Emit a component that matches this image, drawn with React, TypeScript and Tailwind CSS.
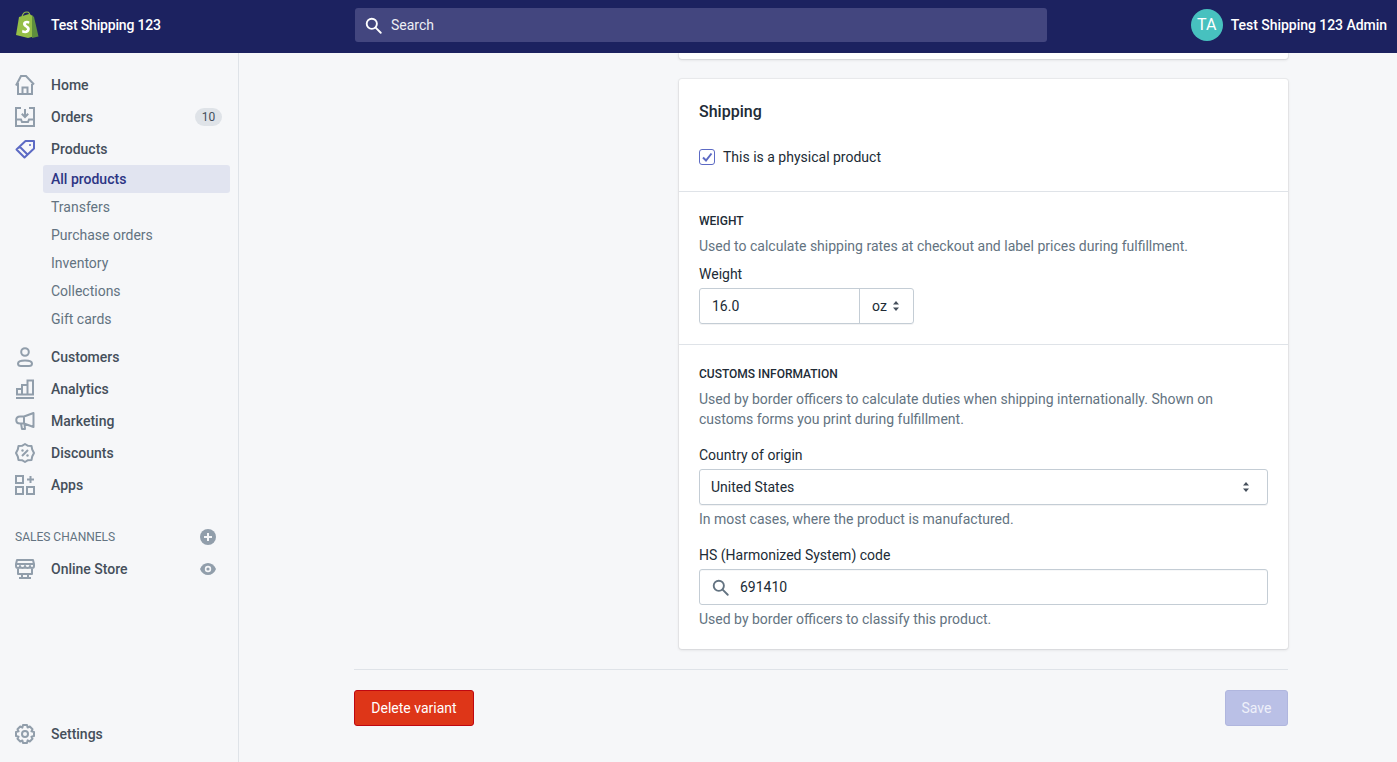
import type { ReactNode } from 'react'

const font = { fontFamily: 'Roboto, sans-serif' }

function Icon({ children, className = 'text-[#919eab]' }: { children: ReactNode; className?: string }) {
  return (
    <svg viewBox="0 0 20 20" className={`w-5 h-5 shrink-0 ${className}`} fill="none" stroke="currentColor" strokeWidth="2">
      {children}
    </svg>
  )
}

const HomeIcon = () => (
  <Icon>
    <path d="M1 10.5 L6 1 H11 L19 9.5 M3 8 V19 H17 V9 M7.5 19 V12.5 H12.5 V19" strokeLinejoin="miter" />
  </Icon>
)
const OrdersIcon = () => (
  <Icon>
    <path d="M6 1 H1 V19 H19 V1 H14 M1 12.5 H6 L7 15 H13 L14 12.5 H19" />
    <path d="M10 2 V9.5 M6.8 6.8 L10 10 L13.2 6.8" />
  </Icon>
)
const ProductsIcon = () => (
  <Icon className="text-[#5c6ac4]">
    <path d="M1.5 10.5 L10.5 2 H19 V9.5 L9.5 18.5 Z M5 8 L12 15" strokeLinejoin="round" />
    <circle cx="15" cy="6" r="1" fill="currentColor" stroke="none" />
  </Icon>
)
const CustomersIcon = () => (
  <Icon>
    <circle cx="10" cy="5" r="3.8" />
    <path d="M3 16.5 C3 12.5 17 12.5 17 16.5 C17 19 15 19 14 19 H6 C5 19 3 19 3 16.5 Z" />
  </Icon>
)
const AnalyticsIcon = () => (
  <Icon>
    <path d="M1 19 H19 M2 15.5 V10 H7 V15.5 M7 15.5 V6 H12.5 V15.5 M12.5 15.5 V1.5 H18 V15.5 M1 15.5 H19" />
  </Icon>
)
const MarketingIcon = () => (
  <Icon>
    <path d="M18.5 2 V16 L9 12.5 H5 C0 12.5 0 5.5 5 5.5 H9 Z M9 5.5 V12.5 M6 12.5 L7 18 H10 L9.5 13" strokeLinejoin="round" />
  </Icon>
)
const DiscountsIcon = () => (
  <Icon>
    <path d="M10 1 L13 2.8 L16.5 3 L17.2 6.5 L19 10 L17.2 13.5 L16.5 17 L13 17.2 L10 19 L7 17.2 L3.5 17 L2.8 13.5 L1 10 L2.8 6.5 L3.5 3 L7 2.8 Z" strokeLinejoin="round" />
    <path d="M13 7 L7 13" />
    <circle cx="7.5" cy="7.5" r="1.2" fill="currentColor" stroke="none" />
    <circle cx="12.5" cy="12.5" r="1.2" fill="currentColor" stroke="none" />
  </Icon>
)
const AppsIcon = () => (
  <Icon>
    <path d="M1 1 H8 V8 H1 Z M1 12 H8 V19 H1 Z M12 12 H19 V19 H12 Z M15.5 1 V8 M12 4.5 H19" />
  </Icon>
)
const StoreIcon = () => (
  <Icon>
    <path d="M2 1 H18 L19 5 V7 C19 9.5 15 9.5 15 7 C15 9.5 10 9.5 10 7 C10 9.5 5 9.5 5 7 C5 9.5 1 9.5 1 7 V5 Z M1 5 H19 M3 9 V15 H17 V9 M7 15 V19 M13 15 V19 M4 19 H16" strokeLinejoin="round" />
  </Icon>
)
const SettingsIcon = () => (
  <Icon>
    <circle cx="10" cy="10" r="3" />
    <path d="M8 1 H12 L12.6 3.6 L14.8 2.5 L17.5 5.2 L16.4 7.4 L19 8 V12 L16.4 12.6 L17.5 14.8 L14.8 17.5 L12.6 16.4 L12 19 H8 L7.4 16.4 L5.2 17.5 L2.5 14.8 L3.6 12.6 L1 12 V8 L3.6 7.4 L2.5 5.2 L5.2 2.5 L7.4 3.6 Z" strokeLinejoin="round" />
  </Icon>
)

function Updown() {
  return (
    <svg viewBox="0 0 8 12" className="w-2 h-3 text-[#454f5b]" fill="currentColor">
      <path d="M4 1 L7 4.5 H1 Z M4 11 L1 7.5 H7 Z" />
    </svg>
  )
}

function SearchGlyph({ className }: { className: string }) {
  return (
    <svg viewBox="0 0 20 20" className={className} fill="none" stroke="currentColor" strokeWidth="2.2">
      <circle cx="8" cy="8" r="6" />
      <path d="M12.5 12.5 L18.5 18.5" strokeLinecap="round" />
    </svg>
  )
}

function NavItem({ icon, label, children }: { icon: ReactNode; label: string; children?: ReactNode }) {
  return (
    <div className="h-8 flex items-center pl-[15px] pr-[16px]">
      {icon}
      <span className="ml-4 pt-px text-[14px] font-medium text-[#454f5b]">{label}</span>
      <div className="ml-auto flex items-center">{children}</div>
    </div>
  )
}

function Section({ children }: { children: ReactNode }) {
  return <div className="border-t border-[#dfe3e8] px-5">{children}</div>
}

export default function App() {
  const subItems = ['Transfers', 'Purchase orders', 'Inventory', 'Collections', 'Gift cards']

  return (
    <div style={font} className="h-screen flex flex-col overflow-hidden bg-[#f6f7f9] text-[14px] text-[#212b36]">
      {/* TOP BAR */}
      <header className="h-[53px] shrink-0 bg-[#1c2260] flex items-center pb-[3px] text-white">
        <div className="w-[355px] shrink-0 flex items-center pl-[15px]">
          <svg viewBox="0 0 24 28" className="w-6 h-7 shrink-0">
            <path d="M1 24 L4 6 L14 3 L18 5 L20 25 L13 27 Z" fill="#95bf47" />
            <path d="M17 4.6 L19 6 L23.5 25.5 L17 27 Z" fill="#5e8e3e" />
            <path d="M7 7 C7 2 10 1 12 1 C14 1 15 3 15 6" fill="none" stroke="#95bf47" strokeWidth="1.2" />
            <path d="M14.5 10.5 C12 9 8 10 8 13 C8 16 12 16 12 18.5 C12 20 9.5 20 7.5 18.8 L7 21.5 C10 23 14.5 22.5 14.8 18 C15 15 11 14.5 11 13 C11 12 12.5 11.8 14 12.8 Z" fill="#fff" />
          </svg>
          <span className="ml-3 text-[14px] font-medium tracking-[-0.18px]">Test Shipping 123</span>
        </div>
        <div className="w-[692px] h-[34px] bg-[#43467f] rounded-[3px] flex items-center pl-[10px]">
          <SearchGlyph className="w-[17px] h-[17px] text-white" />
          <span className="ml-[9px] text-[14px] text-[#eceef5]">Search</span>
        </div>
        <div className="ml-auto flex items-center pr-[10px]">
          <div className="w-8 h-8 rounded-full bg-[#47c1bf] flex items-center justify-center text-[16px]">TA</div>
          <span className="ml-2 text-[14px] font-medium tracking-[-0.04px]">Test Shipping 123 Admin</span>
        </div>
      </header>

      <div className="flex-1 flex min-h-0">
        {/* SIDEBAR */}
        <aside className="w-[239px] shrink-0 border-r border-[#dfe3e8] flex flex-col pt-4 pb-3">
          <NavItem icon={<HomeIcon />} label="Home" />
          <NavItem icon={<OrdersIcon />} label="Orders">
            <span className="w-[27px] h-[18px] rounded-full bg-[#dfe3e8] text-[12px] text-[#454f5b] flex items-center justify-center">10</span>
          </NavItem>
          <NavItem icon={<ProductsIcon />} label="Products" />
          <div className="pl-[43px] pr-2">
            <div className="h-7 rounded-[3px] bg-[#e1e4f0] pl-2 pt-px flex items-center font-medium text-[#2d3584]">All products</div>
            {subItems.map((item) => (
              <div key={item} className="h-7 pl-2 pt-px flex items-center text-[#637381]">{item}</div>
            ))}
          </div>
          <div className="h-2 shrink-0"></div>
          <NavItem icon={<CustomersIcon />} label="Customers" />
          <NavItem icon={<AnalyticsIcon />} label="Analytics" />
          <NavItem icon={<MarketingIcon />} label="Marketing" />
          <NavItem icon={<DiscountsIcon />} label="Discounts" />
          <NavItem icon={<AppsIcon />} label="Apps" />
          <div className="h-8 mt-5 flex items-center pl-[15px] pr-[22px] text-[12px] text-[#637381]">
            <span>SALES CHANNELS</span>
            <svg viewBox="0 0 16 16" className="ml-auto w-4 h-4">
              <circle cx="8" cy="8" r="8" fill="#919eab" />
              <path d="M8 4 V12 M4 8 H12" stroke="#f6f7f9" strokeWidth="2" />
            </svg>
          </div>
          <NavItem icon={<StoreIcon />} label="Online Store">
            <svg viewBox="0 0 16 12" className="w-4 h-3 mr-[6px]">
              <path d="M0 6 C3 -2 13 -2 16 6 C13 14 3 14 0 6 Z" fill="#919eab" />
              <circle cx="8" cy="6" r="3.2" fill="#f6f7f9" />
              <circle cx="8" cy="6" r="1.6" fill="#919eab" />
            </svg>
          </NavItem>
          <div className="mt-auto">
            <NavItem icon={<SettingsIcon />} label="Settings" />
          </div>
        </aside>

        {/* MAIN */}
        <main className="flex-1 min-w-0 pl-[115px] pr-[109px] flex flex-col">
          <div className="ml-[325px] h-[6px] shrink-0 bg-white rounded-b-[3px] shadow-[0_0_0_1px_rgba(63,63,68,0.05),0_1px_3px_0_rgba(63,63,68,0.15)]"></div>

          <section className="ml-[325px] mt-5 bg-white rounded-[3px] shadow-[0_0_0_1px_rgba(63,63,68,0.05),0_1px_3px_0_rgba(63,63,68,0.15)]">
            <div className="px-5 pt-[21px] h-[112px]">
              <h2 className="text-[16px] leading-6 font-medium">Shipping</h2>
              <label className="mt-[22px] flex items-center">
                <span className="w-4 h-4 rounded-[3px] border-[1.5px] border-[#5c6ac4] bg-white flex items-center justify-center">
                  <svg viewBox="0 0 12 12" className="w-3 h-3 text-[#5c6ac4]" fill="none" stroke="currentColor" strokeWidth="2">
                    <path d="M2 6.5 L5 9.5 L10.5 2.5" />
                  </svg>
                </span>
                <span className="ml-2 pt-px">This is a physical product</span>
              </label>
            </div>

            <Section>
              <div className="h-[152px] pt-[21px]">
                <h3 className="text-[12px] leading-4 font-medium">WEIGHT</h3>
                <p className="mt-[7px] leading-5 text-[#637381]">Used to calculate shipping rates at checkout and label prices during fulfillment.</p>
                <div className="mt-2 leading-5">Weight</div>
                <div className="mt-1 w-[215px] h-9 flex rounded-[3px] border border-[#c4cdd5] shadow-[0_1px_0_0_rgba(22,29,37,0.05)]">
                  <div className="w-[160px] flex items-center pl-3 border-r border-[#c4cdd5]">16.0</div>
                  <div className="flex-1 flex items-center pl-3 gap-[5px]">oz <Updown /></div>
                </div>
              </div>
            </Section>

            <Section>
              <div className="h-[304px] pt-[21px]">
                <h3 className="text-[12px] leading-4 font-medium">CUSTOMS INFORMATION</h3>
                <p className="mt-[7px] leading-5 text-[#637381]">Used by border officers to calculate duties when shipping internationally. Shown on<br />customs forms you print during fulfillment.</p>
                <div className="mt-[16px] leading-5">Country of origin</div>
                <div className="mt-1 h-9 flex items-center justify-between pl-[11px] pr-[17px] rounded-[3px] border border-[#c4cdd5] shadow-[0_1px_0_0_rgba(22,29,37,0.05)]">
                  <span>United States</span>
                  <Updown />
                </div>
                <p className="mt-1 leading-5 text-[#637381]">In most cases, where the product is manufactured.</p>
                <div className="mt-[16px] leading-5">HS (Harmonized System) code</div>
                <div className="mt-1 h-9 flex items-center pl-3 rounded-[3px] border border-[#c4cdd5] shadow-[inset_0_1px_0_0_rgba(99,115,129,0.05)]">
                  <SearchGlyph className="w-[17px] h-[17px] text-[#637381]" />
                  <span className="ml-[11px]">691410</span>
                </div>
                <p className="mt-1 leading-5 text-[#637381]">Used by border officers to classify this product.</p>
              </div>
            </Section>
          </section>

          <div className="mt-5 pt-5 border-t border-[#dfe3e8] flex items-center justify-between">
            <button className="h-9 w-[120px] rounded-[3px] bg-[#de3618] border border-[#bf0711] text-white">Delete variant</button>
            <button className="h-9 w-[63px] rounded-[3px] bg-[#bac0e6] border border-[#b0b6de] text-[#eef0fa]">Save</button>
          </div>
        </main>
      </div>
    </div>
  )
}
